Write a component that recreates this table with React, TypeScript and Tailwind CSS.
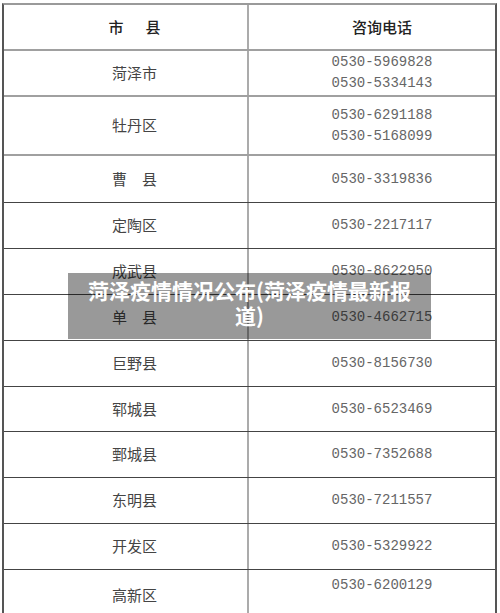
import React from 'react';

type Row = { name: string; phones: string[]; h: string; light?: boolean; last?: boolean };

const rows: Row[] = [
  { name: '菏泽市', phones: ['0530-5969828', '0530-5334143'], h: 'h-[46px]', light: true },
  { name: '牡丹区', phones: ['0530-6291188', '0530-5168099'], h: 'h-[59px]', light: true },
  { name: '曹\u3000县', phones: ['0530-3319836'], h: 'h-[47px]' },
  { name: '定陶区', phones: ['0530-2217117'], h: 'h-[46px]' },
  { name: '成武县', phones: ['0530-8622950'], h: 'h-[46px]' },
  { name: '单\u3000县', phones: ['0530-4662715'], h: 'h-[46px]' },
  { name: '巨野县', phones: ['0530-8156730'], h: 'h-[46px]' },
  { name: '郓城县', phones: ['0530-6523469'], h: 'h-[45px]' },
  { name: '鄄城县', phones: ['0530-7352688'], h: 'h-[46px]' },
  { name: '东明县', phones: ['0530-7211557'], h: 'h-[46px]' },
  { name: '开发区', phones: ['0530-5329922'], h: 'h-[46px]' },
  { name: '高新区', phones: ['0530-6200129'], h: 'h-[50px]', last: true },
];

const cjk = { fontFamily: '"Noto Sans CJK SC", "Noto Sans", sans-serif' };
const mono = { fontFamily: '"Liberation Mono", "DejaVu Sans Mono", monospace' };

export default function App() {
  return (
    <div className="relative w-[500px] h-[613px] overflow-hidden bg-white pt-[3px]">
      <div className="ml-[2px] w-[495px] border-l-2 border-r-2 border-t-2 border-l-[#555] border-r-[#555] border-t-[#9a9a9a]">
        <div className="flex h-[46px] border-b-2 border-[#a0a0a0]">
          <div className="w-[245px] border-r-2 border-[#ababab] flex items-center justify-center pl-[18px] text-[15px] text-[#222] font-medium" style={cjk}>
            市<span className="inline-block w-[22px]" />县
          </div>
          <div className="flex-1 flex items-center justify-center pl-[20px] text-[15px] text-[#222] font-medium" style={cjk}>
            咨询电话
          </div>
        </div>
        {rows.map((r) => (
          <div
            key={r.name}
            className={`flex ${r.h} ${r.last ? '' : r.light ? 'border-b-2 border-[#a0a0a0]' : 'border-b border-[#444]'}`}
          >
            <div className="w-[245px] border-r-2 border-[#ababab] flex items-center justify-center pl-[18px] text-[15px] text-[#444]" style={cjk}>
              {r.name}
            </div>
            <div
              className={`flex-1 flex flex-col ${r.last ? 'justify-start pt-[5px]' : 'justify-center'} items-center pl-[20px] text-[14px] leading-[21px] text-[#666]`}
              style={mono}
            >
              {r.phones.map((p) => (
                <span key={p}>{p}</span>
              ))}
            </div>
          </div>
        ))}
      </div>
      <div className="absolute left-[68px] top-[273px] w-[363px] h-[66px] bg-black/40 px-[15px] pt-[5px] text-center text-white font-bold text-[21px] leading-[25px]" style={cjk}>
        菏泽疫情情况公布(菏泽疫情最新报道)
      </div>
    </div>
  );
}
